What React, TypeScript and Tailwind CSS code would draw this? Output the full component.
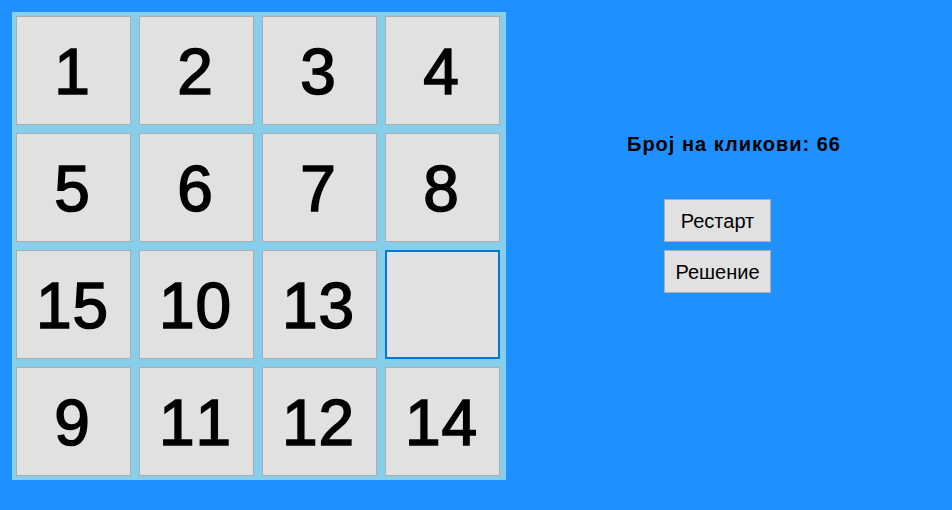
import React from "react";

const tiles: (number | null)[] = [1, 2, 3, 4, 5, 6, 7, 8, 15, 10, 13, null, 9, 11, 12, 14];

export default function App() {
  return (
    <div
      className="w-[952px] h-[510px] bg-[#1E90FF] flex overflow-hidden"
      style={{ fontFamily: '"Liberation Sans", Arial, sans-serif' }}
    >
      <div className="ml-[12px] mt-[12px] w-[494px] h-[468px] bg-[#87CEEB] pl-[4px] pt-[4px]">
        <div className="grid grid-cols-[repeat(4,115px)] grid-rows-[repeat(4,109px)] gap-[8px]">
          {tiles.map((t, i) =>
            t === null ? (
              <div key={i} className="bg-[#E1E1E1] border-2 border-[#0078D7]" />
            ) : (
              <div
                key={i}
                className="bg-[#E1E1E1] border border-[#ADADAD] flex items-center justify-center"
              >
                <span className="block text-[64px] leading-none font-normal tracking-[1px] text-black [font-kerning:none] [-webkit-text-stroke:1.6px_black] -translate-x-[1px] translate-y-[1px]">
                  {t}
                </span>
              </div>
            )
          )}
        </div>
      </div>
      <div className="flex flex-col ml-[121px] pt-[134px]">
        <div className="text-[20px] leading-[20px] font-bold tracking-[1px] text-black whitespace-nowrap">Број на кликови: 66</div>
        <div className="flex flex-col gap-[8px] ml-[37px] mt-[45px]">
          <div className="w-[107px] h-[43px] bg-[#E1E1E1] border border-[#ADADAD] flex items-center justify-center text-[20px] text-black">
            Рестарт
          </div>
          <div className="w-[107px] h-[43px] bg-[#E1E1E1] border border-[#ADADAD] flex items-center justify-center text-[20px] text-black">
            Решение
          </div>
        </div>
      </div>
    </div>
  );
}
